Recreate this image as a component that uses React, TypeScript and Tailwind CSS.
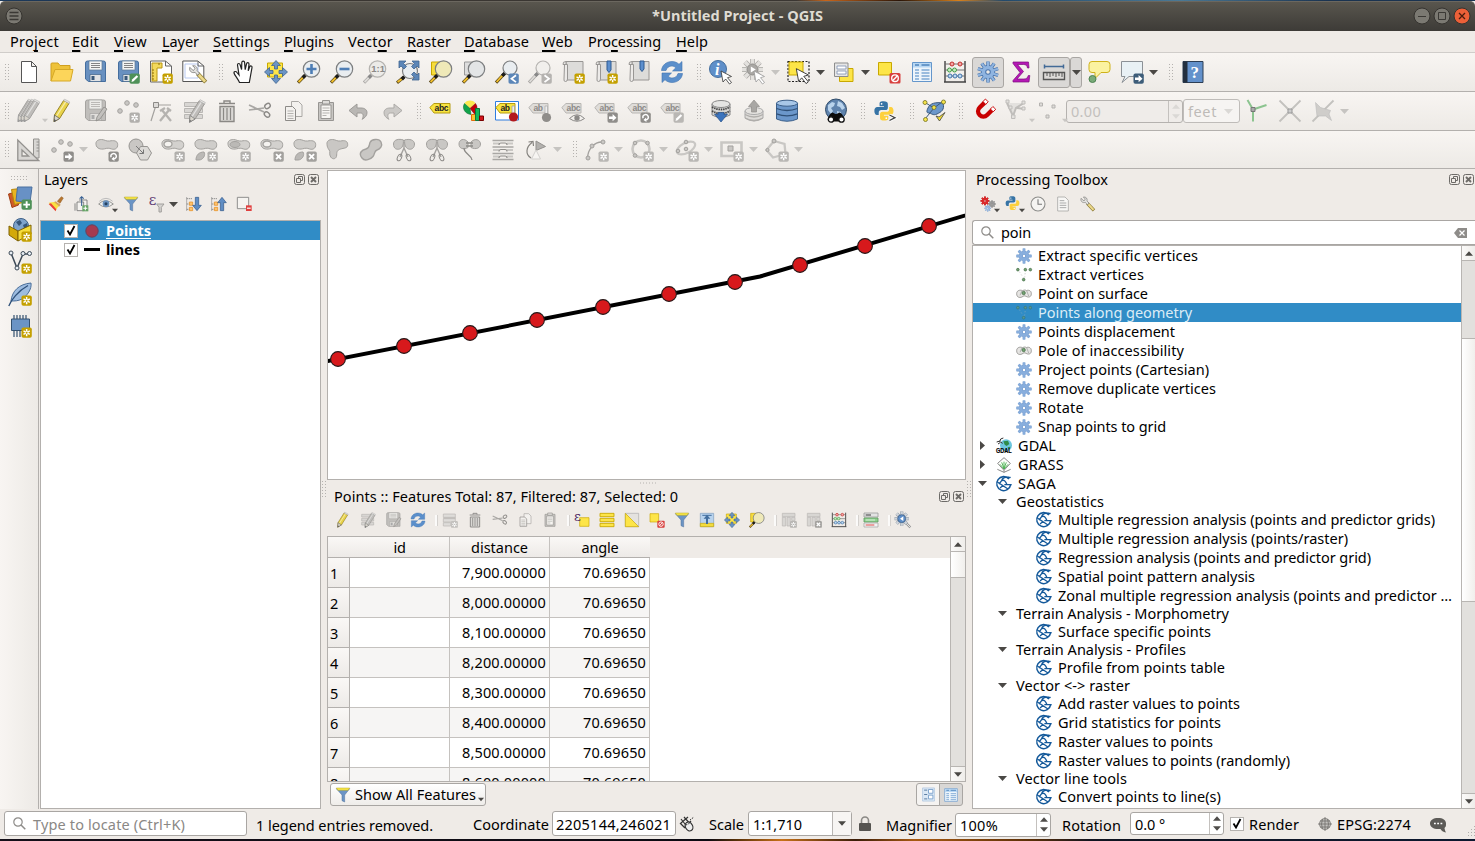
import React, { useLayoutEffect, useRef, useState } from "react";

type Kids = { children?: React.ReactNode };

/* Text run whose tracking is adjusted so that it takes the given width. */
function Fit({ w, className = "", children }: { w: number; className?: string } & Kids) {
  const ref = useRef<HTMLSpanElement>(null);
  const [ls, setLs] = useState(0);
  useLayoutEffect(() => {
    const el = ref.current;
    if (!el) return;
    const n = (el.textContent || "").length || 1;
    setLs((w - el.getBoundingClientRect().width) / n);
  }, [w]);
  return (
    <span ref={ref} className={"inline-block shrink-0 whitespace-pre " + className} style={{ letterSpacing: ls }}>
      {children}
    </span>
  );
}

function Svg({ s = 24, className = "", children }: { s?: number; className?: string } & Kids) {
  return (
    <svg width={s} height={s} viewBox="0 0 24 24" fill="none" className={"shrink-0 overflow-visible " + className}>
      {children}
    </svg>
  );
}

/* ---------- shared glyph parts ---------- */

const G = "#a3a19e";
const GL = "#c9c7c4";

function Star({ c = "#c4a000", x = 13.5, y = 13.5 }: { c?: string; x?: number; y?: number }) {
  return (
    <g transform={`translate(${x} ${y})`}>
      <rect width="10.3" height="10.3" rx="1.8" fill={c} />
      <path d="M5.15 1.6v7.1M2 3.4l6.3 3.5M8.3 3.4L2 6.9" stroke="#fff" strokeWidth="1.5" />
      <circle cx="5.15" cy="5.15" r="1" fill={c} />
    </g>
  );
}
function BadgeBox({ c = "#8f8d8a", children }: { c?: string } & Kids) {
  return (
    <g transform="translate(13.5 13.5)">
      <rect width="10.3" height="10.3" rx="1.8" fill={c} />
      {children}
    </g>
  );
}
const ArrowB = ({ c = "#8f8d8a" }: { c?: string }) => (
  <BadgeBox c={c}><path d="M1.5 3.9h3.6V1.6L9 5.15 5.1 8.8V6.5H1.5z" fill="#fff" /></BadgeBox>
);
const RotB = () => (
  <BadgeBox><path d="M2.6 5.8A2.7 2.7 0 1 1 6.6 7L4.200 7.400" stroke="#fff" strokeWidth="1.4" /><path d="M5.600 5L3 7.400l3 2z" fill="#fff" /></BadgeBox>
);
const XB = () => (
  <BadgeBox c={G}><path d="M2.6 2.6l5 5M7.6 2.6l-5 5" stroke="#fff" strokeWidth="1.9" /></BadgeBox>
);
const PenB = ({ c = "#4f9158" }: { c?: string }) => (
  <BadgeBox c={c}><path d="M2 8.4l.6-2.3 4.6-4.4 1.5 1.5-4.6 4.5z" fill="#fff" /></BadgeBox>
);

function Mag({ grey, fill = "#e9edf0", cx = 14.5, cy = 9, r = 8.2 }: { grey?: boolean; fill?: string; cx?: number; cy?: number; r?: number }) {
  const hx = cx - r * 0.75;
  const hy = cy + r * 0.75;
  return (
    <g>
      <path d={`M1 22.7L${hx} ${hy}`} stroke={grey ? "#a9a7a4" : "#5a4a1c"} strokeWidth="3.2" />
      <path d={`M1.6 22L${hx - 2.2} ${hy + 2.2}`} stroke={grey ? "#dddbd8" : "#f2bf2c"} strokeWidth="1.8" />
      <path d={`M${hx - 2.6} ${hy + 2.6}L${hx} ${hy}`} stroke={grey ? "#888" : "#1c1c1c"} strokeWidth="3.4" />
      <circle cx={cx} cy={cy} r={r} fill={fill} stroke={grey ? "#b5b3b0" : "#7d7f80"} strokeWidth="1.2" />
    </g>
  );
}

const Floppy = ({ grey }: { grey?: boolean }) => (
  <g>
    <path d="M2.5 3q0-2 2-2h16q2 0 2 2v18.5h-17l-3-2.5z" fill={grey ? "#c0beBB" : "#6890c0"} stroke={grey ? "#a5a3a0" : "#456e9e"} />
    <path d="M6 1h13v9H6z" fill={grey ? "#ecebe8" : "#f5f5f3"} stroke={grey ? "#a5a3a0" : "#5b7896"} strokeWidth=".7" />
    <path d="M8 3.5h9M8 5.5h9M8 7.5h9" stroke={grey ? "#b5b3b0" : "#777"} strokeWidth=".9" />
    <path d="M7 14.5h11v7H7z" fill={grey ? "#e1dfdc" : "#e1e3e5"} stroke={grey ? "#a5a3a0" : "#3f6288"} strokeWidth=".7" />
    <path d="M8.5 16h3v4h-3z" fill={grey ? "#aaa" : "#39587a"} />
  </g>
);

const Pencil = ({ c = "#e9d34a", d = "#8f7b1c", tip = "#555" }: { c?: string; d?: string; tip?: string }) => (
  <g>
    <path d="M4.5 16L13.6 1.4 19 4.4 9.6 19.5 4 22.8z" fill={c} stroke={d} strokeWidth=".9" />
    <path d="M6.6 17L15.8 2.6" stroke="#fff" strokeOpacity=".55" strokeWidth="1.3" />
    <path d="M13.6 1.4l1-1.2 5.2 2.8-.8 1.5z" fill="#e8e6e3" stroke="#aaa" strokeWidth=".6" />
    <path d="M4 22.8l.5-6.8 5.1 3.5z" fill="#d9d5cc" stroke={tip} strokeWidth=".7" />
    <path d="M4 22.8l.2-2.7 2 1.4z" fill={tip} />
  </g>
);

const Doc = ({ s = "#555", f = "#fff" }: { s?: string; f?: string }) => (
  <path d="M4.5 1.5h10l5 5v16h-15zM14.5 1.5v5h5" fill={f} stroke={s} strokeWidth="1" />
);

function Gear({ f = "#8fb4e0", s = "#4b76ad", hole = "#ece9e6", r = 10.6, n = 10, wide = 3.4 }: { f?: string; s?: string; hole?: string; r?: number; n?: number; wide?: number }) {
  const spokes = Array.from({ length: n }, (_, i) => {
    const a = (i * 2 * Math.PI) / n;
    return `M12 12L${12 + r * Math.sin(a)} ${12 - r * Math.cos(a)}`;
  }).join("");
  return (
    <g>
      <path d={spokes} stroke={s} strokeWidth={wide} />
      <circle cx="12" cy="12" r={r * 0.66} fill={s} />
      <path d={spokes} stroke={f} strokeWidth={wide - 1.4} />
      <circle cx="12" cy="12" r={r * 0.59} fill={f} />
      <circle cx="12" cy="12" r="2.8" fill={s} />
      <circle cx="12" cy="12" r="1.8" fill={hole} />
    </g>
  );
}

const Python = () => (
  <g>
    <path d="M11.5 1C7 1 7 2.6 7 4v2.600h5v1H4.500C2 7.600 1 9.600 1 12s1 4.600 3 4.600h2V14c0-2 1.200-3 3-3h4.800c1.700 0 2.700-1.200 2.700-2.800V4c0-2-1.600-3-5-3z" fill="#3673a5" />
    <path d="M12.500 23c4.500 0 4.500-1.600 4.500-3v-2.600h-5v-1h7.500c2.500 0 3.500-2 3.500-4.400s-1-4.600-3-4.600h-2V10c0 2-1.200 3-3 3h-4.800c-1.700 0-2.700 1.200-2.700 2.800V20c0 2 1.600 3 5 3z" fill="#fdd03c" />
    <circle cx="9.300" cy="3.800" r="1" fill="#fff" />
    <circle cx="14.700" cy="20.300" r="1" fill="#fff" />
  </g>
);

const Funnel = () => (
  <g>
    <path d="M2 2.500h20L14.500 12v10.500l-4-2V12z" fill="#6b94c5" stroke="#54759c" strokeWidth=".8" />
    <path d="M2 1.500h20L19.600 5H4.400z" fill="#f6e54a" stroke="#bca81d" strokeWidth=".7" />
  </g>
);

const Refresh = () => (
  <g fill="#5b8fcb" stroke="#3f73b0" strokeWidth=".6">
    <path d="M1.500 10.500C2 5 6.500 1.500 12 1.500c3 0 5.500 1.200 7 2.800l3-2.800v9.500h-9.500l3.300-3.200C14.800 6.800 13.500 6 12 6c-3 0-5 1.500-6 4.500z" />
    <path d="M22.500 13.500C22 19 17.500 22.500 12 22.500c-3 0-5.500-1.200-7-2.800l-3 2.800V13h9.500l-3.300 3.200c1 1 2.300 1.800 3.800 1.800 3 0 5-1.500 6-4.500z" />
  </g>
);

const FourArrows = () => (
  <g fill="#6b94c5" stroke="#3f658f" strokeWidth=".8">
    <path d="M12 .5l4.500 5h-3V9h-3V5.500h-3zM12 23.500l4.500-5h-3V15h-3v3.500h-3zM.5 12l5-4.500v3H9v3H5.500v3zM23.500 12l-5-4.500v3H15v3h3.500v3z" />
  </g>
);

const Blob = ({ y = 0, f = "#cfcdca" }: { y?: number; f?: string }) => (
  <path transform={`translate(0 ${y})`} d="M1 6.500C.5 3 3 1.500 6.500 1.500c3 0 4.500 2 8 1.500 4-.8 8-.5 8.200 3.500.2 4-3 5.500-6 4.500s-4-1-7-.2C5.500 11.800 1.500 10.500 1 6.500z" fill={f} stroke={G} />
);

function Tag({ c = "#f9e43f", s = "#b49b12", t = "#222", w = 19, label = "abc" }: { c?: string; s?: string; t?: string; w?: number; label?: string }) {
  return (
    <g>
      <path d={`M.8 8.500L5 4.500h${w - 2}v9.500H5z`} fill={c} stroke={s} />
      <text x="5.500" y="12" fontFamily="Liberation Sans" fontWeight="700" fontSize="8.500" fill={t} textLength={label.length * 4.700}>{label}</text>
    </g>
  );
}
const GTag = ({ label = "abc", w = 17 }: { label?: string; w?: number }) => <Tag c="#dfddda" s="#b8b6b3" t="#8b8987" label={label} w={w} />;

const Cursor = ({ f = "#fff", s = "#333" }: { f?: string; s?: string }) => (
  <path d="M12 11l10.500 5.500-4 1.200 4 4.800-2 1.500-3.800-5-2.700 3z" fill={f} stroke={s} strokeWidth=".8" />
);
const Abacus = () => (
  <g>
    <path d="M2 1v21M22 1v21M1 22h22" stroke="#444" strokeWidth="1.400" />
    <path d="M2 4h20M2 10h20M2 16h20" stroke="#666" strokeWidth=".9" />
    <g strokeWidth="1">
      <g fill="#f4a6a6" stroke="#c3302c"><circle cx="9" cy="4" r="2" /><circle cx="17" cy="4" r="2" /></g>
      <g fill="#c4ecc0" stroke="#459b48"><circle cx="6.500" cy="10" r="2" /><circle cx="11.500" cy="10" r="2" /></g>
      <g fill="#bdd9f2" stroke="#3f72a8"><circle cx="7" cy="16" r="2" /><circle cx="12" cy="16" r="2" /><circle cx="17" cy="16" r="2" /></g>
    </g>
  </g>
);
const Deselect = () => (
  <g>
    <path d="M1.500 2.500h13v12.500h-13z" fill="#fde548" stroke="#c8a800" />
    <rect x="12.500" y="13" width="11" height="10.500" rx="1.500" fill="#d8403e" />
    <circle cx="18" cy="18.200" r="3.300" stroke="#fff" strokeWidth="1.400" /><path d="M15.800 20.500l4.400-4.600" stroke="#fff" strokeWidth="1.400" />
  </g>
);
const TableI = () => (
  <g>
    <path d="M2.500 2.500h19v19h-19z" fill="#eef5fb" stroke="#6496cb" />
    <path d="M3 3h18v4.500H3z" fill="#b8d7f3" />
    <path d="M5 5h4M11.500 5h8" stroke="#4f85bd" strokeWidth="1.300" />
    <path d="M5 10h4M5 13h4M5 16h4M5 19h4M11.500 10h8M11.500 13h8M11.500 16h8M11.500 19h8" stroke="#7fa9d5" strokeWidth="1.400" />
  </g>
);
const Trash = () => (
  <g stroke="#8a8885" strokeWidth="1.400">
    <path d="M4 4.500h16M9 4V2h6v2" />
    <path d="M5 7.500h14v15H5z" fill="#dad8d5" />
    <path d="M8.500 9v12M12 9v12M15.500 9v12" strokeWidth="1.200" />
  </g>
);
const Scissors = () => (
  <g stroke="#8c8a87" strokeWidth="1.400">
    <path d="M1 6l15 7M1 11l15-2" strokeWidth="1.700" stroke="#a9a7a4" />
    <ellipse cx="19.500" cy="7" rx="3" ry="2.200" transform="rotate(-35 19.500 7)" />
    <ellipse cx="19" cy="15.500" rx="3" ry="2.200" transform="rotate(40 19 15.500)" />
  </g>
);
const Copy = () => (
  <g stroke="#aaa8a5" fill="#f3f1ee">
    <path d="M10.500 2.500h7l3.500 3.500v11.500h-10.500z" />
    <path d="M4.500 7.500h7l3 3v11h-10z" stroke="#8c8a87" /><path d="M6.500 12h6M6.500 14.500h6M6.500 17h6M6.500 19.500h6" stroke="#b5b3b0" />
  </g>
);
const Paste = () => (
  <g stroke="#979592">
    <path d="M4.500 3.500h15v18h-15z" fill="#c8c6c3" /><path d="M7 6h10v13.500H7z" fill="#f7f5f2" /><path d="M8.500 1.500h7v3.500h-7z" fill="#dedcd9" />
    <path d="M8.500 9h7M8.500 11.500h7M8.500 14h7M8.500 16.500h4" stroke="#b5b3b0" />
  </g>
);
const EditRows = () => (
  <g>
    <path d="M2.500 3.500h18v4h-18zM2.500 9.500h18v4h-18zM2.500 15.500h18v4h-18z" fill="#d8d6d3" stroke="#b9b7b4" />
    <g transform="translate(3.500 .5)"><Pencil c="#bfbdba" d="#979592" tip="#777" /></g>
  </g>
);
const FloppyPen = () => (
  <g><Floppy grey /><path d="M13 22l1-4 7-10 3 2-7 10z" fill="#c3c1be" stroke="#8c8a87" strokeWidth=".8" /></g>
);
const Wrench = () => (
  <g>
    <path d="M11 11l10 10.500" stroke="#8d7b35" strokeWidth="5" /><path d="M12.500 12.500l7.800 8.300" stroke="#ecd98b" strokeWidth="3.200" />
    <path d="M1.500 3.500C.5 8 4 11 8 9.500l3 3.500 2.500-2.300-3-3.200C11.500 4 9 .8 5 1.500l3 3-2 3z" fill="#e4e4e2" stroke="#7c7c7a" />
  </g>
);
const Pts = ({ c = GL }: { c?: string }) => (
  <g fill={c} stroke={G}><circle cx="4" cy="12" r="2.300" /><circle cx="11" cy="4" r="2.300" /><circle cx="20" cy="6" r="2.300" /></g>
);
const SagaI = () => (
  <g>
    <circle cx="11.500" cy="12" r="10" fill="#fff" />
    <path d="M19.500 4.500A10.500 10.500 0 1 0 22 13" stroke="#14599a" strokeWidth="2.300" />
    <path d="M23.500 13H12.500M17.500 2.800L22 2M20 1.800c-7-1-11 2-11.500 5M2 9l16 10.500M8.500 7c3-2 6 .5 8 6M8.500 7L4.500 12M6 18l5-4" stroke="#14599a" strokeWidth="2" />
  </g>
);
const GlobeLand = ({ c = "#42648c", s = "#2f4b69" }: { c?: string; s?: string }) => (
  <g><circle cx="12" cy="10.500" r="10.500" fill={c} stroke={s} />
    <path d="M4 6l4-3 3 1-1 3-3 2 2 3-2 3-3-4zM14 2l4 2 3 5-3 2-2-3-3-1zM13 12l4 1-1 4-3 1z" fill="#b9d3ec" /></g>
);

/* ---------- toolbar icons ---------- */

const I: Record<string, React.ReactNode> = {
  newDoc: <Doc />,
  open: <g><path d="M1 21V4q0-1 1-1h6l2 2.500h10V10" fill="#eec23a" stroke="#d0a020" /><path d="M1 21L5 9.500h18L20.500 21z" fill="#fcd55a" stroke="#d6a826" /></g>,
  save: <Floppy />,
  saveAs: <g><Floppy /><PenB /></g>,
  newLayout: <g><path d="M1.500 1h15l6 5v16h-21z" fill="#fff" stroke="#666" /><path d="M16.500 1v5h6" stroke="#666" /><path d="M3 3h10v5H8v13H3z" fill="#f3d95b" stroke="#b99615" /><path d="M3 10h2M3 13h2M3 16h2M3 19h2M10 3v2" stroke="#8c6f0c" /><Star /></g>,
  layoutMgr: <g><path d="M.8 1h15l6 5v15.500H.8z" fill="#fff" stroke="#555" /><path d="M3 4h13v14H3z" stroke="#b7c8f0" /><path d="M16 1v5h6" stroke="#666" /><g transform="translate(6.500 4.500) scale(.82)"><Wrench /></g></g>,
  hand: <path d="M8.500 22.500C7 19 3.500 15 3 13c-.3-1.800 2-2 3-.5L8 15 6.500 5c0-2 2.300-2 2.700 0l1.400 4.500L10.800 2.500c.2-2 2.700-1.900 2.800.1l.6 7L15.500 3.800c.4-1.800 2.600-1.500 2.500.4l-.8 6.600 1.500-4c.8-1.500 2.600-.8 2.300.8l-1.700 9.400-1 5.500z" fill="#fff" stroke="#222" strokeWidth="1.200" />,
  panSel: <g><path d="M3.500 3h15v14h-15z" fill="#fde548" stroke="#c8a800" /><FourArrows /></g>,
  zoomIn: <g><Mag /><path d="M14.500 4v10M9.500 9h10" stroke="#4d7db5" strokeWidth="2.600" /></g>,
  zoomOut: <g><Mag /><path d="M9.500 9h10" stroke="#4d7db5" strokeWidth="2.600" /></g>,
  zoom11: <g><Mag grey fill="#ecebe8" /><text x="8.200" y="12.300" fontFamily="Liberation Sans" fontWeight="700" fontSize="9.500" fill="#8b8987">1:1</text></g>,
  zoomFull: <g><Mag cx={14} cy={11} r={7.500} /><path d="M3 1h7L7.500 3.500l3 3-2.500 2.500-3-3L3 8zM23 1h-7l2.500 2.500-3 3L18 9l3-3 2 2zM23 20h-7l2.500-2.500-3-3 2.500-2.500 3 3 2-2z" fill="#5c86b7" stroke="#3f6590" strokeWidth=".8" /></g>,
  zoomSel: <g><path d="M2.500 2h9v13h-9z" fill="#f7dd3c" stroke="#c8a800" /><Mag fill="#efe9b8" /></g>,
  zoomLayer: <g><path d="M2.500 2h9v13h-9z" fill="#ddd" stroke="#999" /><Mag fill="#e3e5e6" /></g>,
  zoomLast: <g><Mag cx={15} cy={8} r={7} /><BadgeBox c="#5b86b8"><path d="M7.500 1.800L3 5.200l4.500 3.400" stroke="#fff" strokeWidth="1.800" /></BadgeBox></g>,
  zoomNext: <g><Mag grey cx={15} cy={8} r={7} fill="#f1efec" /><BadgeBox c="#b5b3b0"><path d="M3 1.800l4.500 3.400L3 8.600" stroke="#fff" strokeWidth="1.800" /></BadgeBox></g>,
  bookNew: <g><path d="M5 1.500h17V20H5z" fill="#dddcda" stroke="#989694" /><path d="M5 1.500Q1.500 1.500 2 4.500h3zM3.500 4.500h3V19q0 2.500-2 2.500T3 19z" fill="#eceae8" stroke="#989694" /><Star /></g>,
  bookShow: <g><path d="M5 1.500h17V20H5z" fill="#dddcda" stroke="#989694" /><path d="M5 1.500Q1.500 1.500 2 4.500h3zM3.500 4.500h3V19q0 2.500-2 2.500T3 19z" fill="#eceae8" stroke="#989694" /><path d="M13 1h4v9l-2 2.500-2-2.500z" fill="#5c8fce" stroke="#2f5b92" /><Star /></g>,
  bookMgr: <g><path d="M5 1.500h17V20H5z" fill="#dddcda" stroke="#989694" /><path d="M5 1.500Q1.500 1.500 2 4.500h3zM3.500 4.500h3V19q0 2.500-2 2.500T3 19z" fill="#eceae8" stroke="#989694" /><path d="M13 1h4v8l-2 2.500L13 9z" fill="#5c8fce" stroke="#2f5b92" /></g>,
  refresh: <Refresh />,
  info: <g><circle cx="9" cy="9" r="8.500" fill="#5f8fc9" stroke="#456f9f" /><text x="6" y="14.500" fontFamily="Liberation Serif" fontStyle="italic" fontWeight="700" fontSize="16" fill="#fff">i</text><Cursor /></g>,
  runAction: <g><g transform="translate(-1.500 -2.500)"><Gear f="#e3e1de" s="#aaa8a5" n={8} r={10.500} wide={5} /></g><circle cx="10.500" cy="9.500" r="5.500" fill="#a9a7a4" stroke="#8f8d8a" /><path d="M8.800 6.500l5 3-5 3z" fill="#fff" /><Cursor s="#999" /></g>,
  select: <g><path d="M1 1.500h21v20H1z" stroke="#222" strokeDasharray="2 1.500" strokeWidth="1.200" /><path d="M2 2h14v13H2z" fill="#fde548" stroke="#c8a800" /><g transform="translate(-4.500 -4) scale(1.150)"><Cursor /></g></g>,
  selForm: <g><path d="M7.500 8.500h13.500v13h-13.500z" fill="#fde548" stroke="#c8a800" /><path d="M2.500 3h13.500v13.500H2.500z" fill="#e6e6e6" stroke="#8d8d8d" /><path d="M5 6h9v3H5zM5 11h9v3H5z" fill="#fff" stroke="#7d8fb0" strokeWidth=".8" /></g>,
  deselect: <Deselect />,
  table: <TableI />,
  abacus: <Abacus />,
  gear: <Gear />,
  sigma: <path d="M4 2h15.500l.5 6h-1.500c-.5-2.500-1.500-3.500-4-3.500H8.500l6 7-6.500 7.500h7c2.500 0 3.500-1 4.300-3.500h1.500L20 22H4v-1.500L11 12.500 4 3.500z" fill="#b518b5" stroke="#7a0e7c" strokeWidth=".7" />,
  measure: <g><path d="M2 6.500h20M2.500 4.500v4M21.500 4.500v4" stroke="#426a97" strokeWidth="1.500" /><path d="M1.500 12.500h21v7h-21z" fill="#dcdad8" stroke="#555" strokeWidth="1.400" /><path d="M5 13v3M8 13v4M11 13v3M14 13v4M17 13v3M20 13v4" stroke="#555" /></g>,
  tip: <g><path d="M5 1.500h15q3 0 3 3v5q0 3-3 3h-6L8 18.500v-6H5q-3 0-3-3v-5q0-3 3-3z" fill="#fbf2a0" stroke="#cfb21a" /><circle cx="5.500" cy="19" r="3.500" fill="#79ab78" stroke="#4d8352" /></g>,
  annot: <g><path d="M1.500 1.500h21v15H9L2 22.500 5 16.500H1.500z" fill="#e9f1f5" stroke="#8c9196" /><ArrowB c="#3d5d79" /></g>,
  help: <g><path d="M2 1.500h20v21H2z" fill="#6391cb" stroke="#2c3e55" /><path d="M2 1.500h4.500v21H2z" fill="#222f3f" /><text x="9.500" y="17.500" fontFamily="Liberation Serif" fontWeight="700" fontSize="17" fill="#fff">?</text></g>,

  pencils: <g><g transform="translate(-3 0)"><Pencil c="#b9b7b4" d="#9d9b98" tip="#999" /></g><Pencil c="#b9b7b4" d="#9d9b98" tip="#999" /><g transform="translate(3 0)"><Pencil c="#bfbdba" d="#9d9b98" tip="#999" /></g></g>,
  pencil: <Pencil />,
  floppyPen: <FloppyPen />,
  addPts: <g><Pts /><Star c="#b1afac" /></g>,
  vertexTool: <g><path d="M2 22L7 6h15" stroke={G} strokeWidth="1.200" /><path d="M4.500 3.500h5v5h-5z" fill="#dddbd8" stroke="#8c8a87" /><path d="M11 22l9-11M13 11l9 11M11 12l5-3M18 9l4 3" stroke="#b5b3b0" strokeWidth="2.300" /></g>,
  editRows: <EditRows />,
  trash: <Trash />,
  cut: <Scissors />,
  copy: <Copy />,
  paste: <Paste />,
  undo: <path d="M2 11.500L10 5v4h4c4 0 6 2 6 4.800s-2 5-5 6.500c1.500-2 2-6.300-1.500-6.300H10v4z" fill="#b9b7b4" stroke="#9d9b98" />,
  redo: <path d="M22 11.500L14 5v4h-4c-4 0-6 2-6 4.800s2 5 5 6.500c-1.500-2-2-6.300 1.500-6.300H14v4z" fill="#cbc9c6" stroke="#acaaa7" />,
  tag: <Tag w={18} />,
  diagram: <g><path d="M8 9.500L2.500 4A7.500 7.500 0 0 1 13.500 4z" fill="#fce94f" /><path d="M8 9.500L13.500 4.500Q17 9 12.500 15z" fill="#c4000a" stroke="#6b0000" strokeWidth=".5" /><path d="M8 9.500L2.500 4.500C-.5 9 3 15 9 15.500z" fill="#12a34a" stroke="#066028" strokeWidth=".5" /><path d="M9.500 15.500h4v6h-4z" fill="#fbc42c" stroke="#e26b0a" /><path d="M13.500 9.500h4v12h-4z" fill="#15b95a" stroke="#08793a" /><path d="M17.500 17h4v4.500h-4z" fill="#d3151c" stroke="#780000" /></g>,
  tagPin: <g><path d="M.5 2.500h23v18.500H.500z" fill="#fff" stroke="#2f7de0" /><Tag w={17} label="ab" /><path d="M17 7h2.500v8H17z" fill="#eee" stroke="#999" strokeWidth=".7" /><circle cx="18.500" cy="18" r="4.600" fill="#b3181c" /></g>,
  gtagPin: <g><GTag label="ab" /><path d="M17 7h2.500v8H17z" fill="#eee" stroke="#aaa" strokeWidth=".7" /><circle cx="18.500" cy="18.500" r="4.600" fill="#8f8d8a" /></g>,
  gtagEye: <g><GTag /><path d="M8.500 19.500Q16 12 23.500 19.500 16 25 8.500 19.500z" fill="#f1efec" stroke="#8b8987" /><circle cx="16" cy="19" r="2.700" fill="#8b8987" /></g>,
  gtagMove: <g><GTag /><ArrowB /></g>,
  gtagRot: <g><GTag /><RotB /></g>,
  gtagPen: <g><GTag /><PenB c="#b9b7b4" /></g>,
  dbIn: <g><path d="M3 5v11q9 5 18 0V5" fill="#d5d5d3" stroke="#888" /><ellipse cx="12" cy="5" rx="9" ry="3.500" fill="#e5e5e3" stroke="#888" /><path d="M3 8q9 5 18 0M3 12q9 5 18 0" stroke="#444" strokeWidth="1.800" strokeDasharray="1.500 .8" /><path d="M12 23l6.500-8-3.500.5v-2H9v2l-3.500-.5z" fill="#3c74bd" stroke="#244f86" strokeWidth=".7" /></g>,
  dbOut: <g><path d="M3 12v7q9 6 18 0v-7" fill="#dedcd9" stroke="#aaa" /><ellipse cx="12" cy="12" rx="9" ry="3.500" fill="#e5e3e0" stroke="#aaa" /><path d="M3 15.500q9 5 18 0M3 19q9 5 18 0" stroke="#b0aeab" strokeWidth="1.300" /><path d="M12 1l5.500 6.500h-3V13h-5V7.500h-3z" fill="#a9a7a4" stroke="#8f8d8a" strokeWidth=".7" /></g>,
  db: <g><path d="M1.500 4v16q10.500 4.500 21 0V4" fill="#6b97cb" stroke="#3b5f8a" /><ellipse cx="12" cy="4.200" rx="10.500" ry="3" fill="#a8c7e8" stroke="#3b5f8a" /><path d="M1.500 9.500q10.500 4 21 0M1.500 14.800q10.500 4 21 0" stroke="#2f5077" strokeWidth="1.300" /></g>,
  globeBino: <g><GlobeLand c="#5f83ad" /><path d="M3.500 20.500q2-6.500 5-7l3 1.500 1 0 3-1.500q3 .5 5 7l-4 2h-8z" fill="#0c0c0c" /><circle cx="7" cy="20.500" r="2.700" fill="#fff" stroke="#111" strokeWidth="1.300" /><circle cx="17.500" cy="20.500" r="2.700" fill="#fff" stroke="#111" strokeWidth="1.300" /></g>,
  python: <g><g transform="translate(.5 1.500) scale(.87)"><Python /></g><path d="M16.500 16l5.500 2.700-5.500 2.800" stroke="#fff" strokeWidth="3" /><path d="M16.500 16l5.500 2.700-5.500 2.800" stroke="#444" strokeWidth="1.300" /></g>,
  topo: <g><path d="M6 9C8 4 14 3 21 4c2 7-2 9-6 11s-6-1-8-1-3-1-1-5z" fill="#6b97cb" stroke="#39587c" /><path d="M3 3.500l9 5.500-9 11M12 9l8-6" stroke="#39587c" /><g fill="#f6e54a" stroke="#7e7a2a" strokeWidth=".9"><circle cx="3" cy="3.500" r="2" /><circle cx="12" cy="8.500" r="2" /><circle cx="21.500" cy="3" r="2" /><circle cx="3.500" cy="20.500" r="2" /></g><path d="M14 17l3.500 5L23 13.500l-6 4.500z" fill="#f6e033" stroke="#444" strokeWidth=".8" /></g>,
  magnet: <g transform="translate(1.300 1) rotate(45 11 12) scale(.88)"><path d="M6 5v8a6 6 0 0 0 12 0V5" stroke="#c80000" strokeWidth="5" /><path d="M3.800 1.500h4.500v4H3.800zM15.800 1.500h4.500v4h-4.500z" fill="#fff" stroke="#c80000" /></g>,
  snapVec: <g stroke="#bfbdba" fill="#e3e1de"><path d="M3 4l6 13 3-8 8-5M13 9l8 1" strokeWidth="2" /><path d="M2 1h3v3H2zM7.500 16h3.500v3.500H7.500zM18 2h3v3h-3zM18 8h3v3h-3zM5 7h3v3H5z" /></g>,
  snapPts: <g stroke="#b5b3b0" fill="#dedcd9"><path d="M2.500 4h3v3h-3zM15 6h3v3h-3zM9 16h3v3H9z" /></g>,
  snapTopo: <g><path d="M8 10.500v12M8 10.500L21.500 6M8 10.500L2.500 1" stroke="#8cc48f" strokeWidth="2" /><path d="M6 8.500h4v4H6z" fill="#aaa" stroke="#777" /></g>,
  snapX: <g><path d="M1.500 1.500l21 21M22.500 1.500l-21 21" stroke="#c3c1be" strokeWidth="1.800" /><path d="M10 10h4v4h-4z" fill="#ccc" stroke="#999" /></g>,
  trace: <g><path d="M22.500 1.500l-21 21" stroke="#c3c1be" strokeWidth="1.800" /><path d="M4.500 3.500l5 5 10 3-1.500 3.500 2.500 6.500-6-4.500H6z" fill="#cfcdca" stroke="#bbb" strokeWidth=".6" /></g>,

  triRuler: <g fill="#d8d6d3" stroke="#93918e"><path d="M16.500 1h5.500v19h-5.500z" /><path d="M19.500 4H22M19.500 7H22M19.500 10H22M19.500 13H22" /><path d="M.8 2v20.500h21zM5 12v6h6.500z" fillRule="evenodd" strokeWidth="1.300" /></g>,
  movePts: <g><Pts /><ArrowB /></g>,
  rotFeat: <g><Blob /><RotB /></g>,
  simplify: <g stroke="#979592" fill="#c9c7c4"><circle cx="8" cy="8" r="7" /><path d="M8.500 15l4-6.500h7l4 6.500-4 7h-7z" fill="#dcdad7" /><path d="M8 8l7.500 7.500M11.500 15.500h4v-4" stroke="#777" fill="none" /></g>,
  addRing: <g><Blob f="#d3d1ce" /><ellipse cx="7" cy="6" rx="4" ry="3" fill="#f5f3f0" stroke={G} strokeWidth="1.300" /><Star c="#b1afac" /></g>,
  addPart: <g><Blob /><path d="M2 22c0-5 3-8 8-8 2 3-1 8-5 8z" fill="#bbb9b6" stroke={G} /><Star c="#b1afac" /></g>,
  fillRing: <g><Blob f="#d3d1ce" /><ellipse cx="8" cy="6.500" rx="5" ry="3" fill="#bbb9b6" stroke={G} /><Star c="#b1afac" /></g>,
  delRing: <g><Blob f="#d3d1ce" /><ellipse cx="7" cy="6" rx="4" ry="3" fill="#f5f3f0" stroke={G} strokeWidth="1.300" /><XB /></g>,
  delPart: <g><Blob /><path d="M2 22c0-5 3-8 8-8 2 3-1 8-5 8z" fill="#bbb9b6" stroke={G} /><XB /></g>,
  reshape: <path d="M1 6.500C.5 3 3 1.500 6.500 1.500c3 0 4.500 2 8 1.500 4-.8 7-.5 7.200 3.500.2 4-4 3.500-7 4.500s-4 2-4 6-4 5-6 2 0-5-1.500-7S1.300 9 1 6.500z" fill={GL} stroke={G} />,
  offset: <path d="M3 20c-4-5 0-8 4-9s3-4 4-6.500C12.500 1 20 0 22 4s-1 7-4 8-2 4-4 6.500S6 24 3 20z" fill={GL} stroke={G} strokeWidth="1.400" />,
  split: <g><path d="M11.500 2C7 .5 1.500 1.500 1.500 6s3 6 6 5 4-4 4-9zM12.500 2c5-1.500 10 0 10 4s-3 6-6 5-4-4-4-9z" fill={GL} stroke={G} /><path d="M12 4v6l-4 9M12 10l4 9" stroke={G} strokeWidth="1.400" /><ellipse cx="7.500" cy="19.500" rx="2" ry="3.500" transform="rotate(25 7.500 19.500)" stroke="#8c8a87" /><ellipse cx="16.500" cy="19.500" rx="2" ry="3.500" transform="rotate(-25 16.500 19.500)" stroke="#8c8a87" /></g>,
  merge: <g><path d="M10 4C6-.5 1 1.500 1 6s4 6 9 3.500zM13 4c4-4.500 9.500-2 9.500 2s-4.500 6-9.500 3.500z" fill={GL} stroke={G} /><path d="M8 5h7M8 8h7M6 10c0 6 7 6 8 12" stroke="#8c8a87" strokeWidth="1.300" /></g>,
  mergeAttr: <g><path d="M1.500 2.500h21M1.500 9h21M1.500 15.500h21M1.500 21.500h21" stroke="#a9a7a4" strokeWidth="1.300" /><path d="M2 5.500h6M16 5.500h6M2 12h6M16 12h6M2 18.500h6M16 18.500h6" stroke="#c9c7c4" strokeWidth="1.800" /><path d="M8 7q0-2 2-2h4q2 0 2 2M8 13.500q0-2 2-2h4q2 0 2 2M8 20q0-2 2-2h4q2 0 2 2" stroke="#8f8d8a" strokeWidth="1.200" /></g>,
  rotSym: <g><path d="M12 3l9.500 5.500-9.500 4z" fill="#b3b1ae" stroke="#93918e" /><path d="M12 12l-4.500 9h9z" fill="#f7f5f2" stroke="#d3d1ce" /><path d="M7 20C1 16 2 9 8 4.500M4.500 4L9 3.500 9.500 8" stroke="#85837f" strokeWidth="1.200" /></g>,
  arc: <g><path d="M2.500 20C3 11 9 4 17 4" stroke={G} strokeWidth="1.300" /><g fill={GL} stroke={G}><circle cx="3" cy="20" r="2" /><circle cx="7" cy="8" r="2" /><circle cx="18" cy="4" r="2" /></g><Star c="#b9b7b4" /></g>,
  circ: <g><circle cx="11" cy="11" r="8.500" stroke={GL} strokeWidth="2.600" /><g fill={GL} stroke={G}><circle cx="5" cy="5" r="1.800" /><circle cx="17.500" cy="5" r="1.800" /><circle cx="5" cy="17.500" r="1.800" /></g><Star c="#b9b7b4" /></g>,
  ell: <g><ellipse cx="11" cy="10" rx="10" ry="5" transform="rotate(-28 11 10)" stroke={GL} strokeWidth="2.200" /><g fill={GL} stroke={G}><circle cx="11" cy="4" r="1.800" /><circle cx="11" cy="11" r="1.800" /><circle cx="3" cy="13" r="1.800" /></g><Star c="#b9b7b4" /></g>,
  rectI: <g><path d="M1.500 4.500h20V18h-20z" stroke={GL} strokeWidth="2.600" /><path d="M8 8h5v5H8z" stroke={G} fill={GL} /><Star c="#b9b7b4" /></g>,
  poly: <g><path d="M9 3l10.500 3 1 10L8 19.500 1.500 12z" stroke={GL} strokeWidth="2.300" /><g fill={GL} stroke={G}><circle cx="9" cy="3" r="2" /><circle cx="2.500" cy="12" r="1.600" /></g><Star c="#b9b7b4" /></g>,

  addLayer: <g><path d="M.5 8l7-2 3 13-6.500 2.500z" fill="#d05a28" stroke="#a23e14" /><path d="M3.500 3.500l9-1 2 14-8 2z" fill="#eab421" stroke="#b88608" /><path d="M9.500 1h14.500l-2 15.500-14-1.500z" fill="#6891c5" stroke="#4a709f" /><BadgeBox c="#4f9158"><path d="M5.150 1.800v6.700M1.800 5.150h6.700" stroke="#fff" strokeWidth="1.900" /></BadgeBox></g>,
  geopkg: <g><circle cx="13" cy="8" r="7.500" fill="#7ea3cc" stroke="#3d5f86" /><path d="M8 4l4-2 2 3-3 3zM15 7l4-2 1 5h-4z" fill="#35557a" /><path d="M1 8l9 5v10l-9-6z" fill="#d3a90a" stroke="#7e6204" /><path d="M10 13l13-6v9l-13 7z" fill="#f6dd3d" stroke="#7e6204" /><Star /></g>,
  shp: <g><path d="M3 3l6 15 6-14 7 0" stroke="#3d4a57" strokeWidth="1.500" /><g fill="#e8eef4" stroke="#3d4a57"><circle cx="3" cy="3" r="2" /><circle cx="9" cy="18" r="2" /><circle cx="15" cy="3.500" r="2" /><circle cx="21.500" cy="3.500" r="2" /></g><Star /></g>,
  feather: <g><path d="M3 19C4 9 11 2 23 1c1 6-4 13-9 16-4 2-7 2-11 2z" fill="#9dbce0" stroke="#4a6e99" /><path d="M.800 24C3 18 10 9 20 3.500" stroke="#2e5079" strokeWidth="1.300" /><Star /></g>,
  chip: <g><path d="M6 1v22M9 1v22M12 1v22M15 1v22M18 1v22" stroke="#34516f" strokeWidth="1.200" /><path d="M3.500 5h18v11.500h-18z" fill="#6b94c5" stroke="#34516f" /><Star /></g>,

  brush: <g><path d="M14 8L20 1l3 2-5 8z" fill="#b8762e" stroke="#8a5318" strokeWidth=".7" /><path d="M11 8l8 5-2.500 3L8 10z" fill="#d8a35c" /><path d="M1 10l8-1 7 6-5 7z" fill="#fae042" /><path d="M1 12l3.500-1 8 9-1 3z" fill="#e9403a" /></g>,
  addGroup: <g><path d="M9 6h12v12M6 9h10v13H6zM3 11v11" stroke="#777" fill="#f5f3f0" strokeWidth="1.300" /><path d="M13 1v14M10 4l3-3 3 3" stroke="#365f92" strokeWidth="1.600" /><path d="M14 14h9v9h-9z" fill="#65a365" /><path d="M18.500 15.500v6M15.500 18.500h6" stroke="#fff" strokeWidth="1.600" /></g>,
  eye: <g><path d="M1 12Q11 2 23 12 12 21 1 12z" fill="#f0f0ee" stroke="#8a8a88" strokeWidth="1.300" /><circle cx="12" cy="11.500" r="5" fill="#6890bd" /><circle cx="12" cy="11.500" r="2.300" fill="#26405f" /><path d="M2 8Q12-1 22 8" stroke="#bbb" strokeWidth="1.500" /></g>,
  funnel: <Funnel />,
  epsFilter: <g><text x="1" y="14" fontFamily="DejaVu Serif" fontSize="22" fill="#5e3a73">ε</text><path d="M13 12h11l-4 5v7h-3.500v-7z" fill="#d5d3d0" stroke="#9d9b98" strokeWidth="1.400" /></g>,
  expand: <g><path d="M1 2v20M1 4h8M1 12h6M1 20h6" stroke="#888" strokeWidth="1.400" strokeDasharray="2 1" /><path d="M5 9h5v5H5zM5 17h5v5H5z" fill="#ffc36b" stroke="#e38a1b" /><path d="M14 2h5v12h4l-6.500 8-6.500-8h4z" fill="#5f8dc4" stroke="#2f5585" /></g>,
  collapse: <g><path d="M1 2v20M1 4h8M1 12h6M1 20h6" stroke="#888" strokeWidth="1.400" strokeDasharray="2 1" /><path d="M5 9h5v5H5zM5 17h5v5H5z" fill="#ffc36b" stroke="#e38a1b" /><path d="M14 22h5V10h4l-6.500-8L10 10h4z" fill="#5f8dc4" stroke="#2f5585" /></g>,
  remove: <g><path d="M2 2h17v17H2z" fill="#f5f3f0" stroke="#888" strokeWidth="1.400" /><path d="M15 14h8.500v8.500H15z" fill="#e0403f" /><path d="M16.500 18.300h5.500" stroke="#fff" strokeWidth="1.800" /></g>,

  newRows: <g><path d="M2 3h18v5H2zM2 10h18v5H2zM2 16h11v5H2z" fill="#dedcd9" stroke="#b9b7b4" /><path d="M2 9h19" stroke="#a9a7a4" /><Star c="#c3c1be" /></g>,
  selExpr: <g><path d="M8.500 8.500h14v13h-14z" fill="#fde548" stroke="#c8a800" /><text x="0" y="13" fontFamily="DejaVu Serif" fontSize="20" fill="#4e2a63">ε</text></g>,
  selAll: <g fill="#fde548" stroke="#c8a800" strokeWidth="1.300"><path d="M1.500 2h21v5h-21zM1.500 9.500h21v5h-21zM1.500 17h21v5h-21z" /></g>,
  invert: <g><path d="M2 2h20v20H2z" fill="#e4e2df" stroke="#aaa" /><path d="M2 2v20h20z" fill="#fde548" stroke="#c8a800" /></g>,
  topSel: <g><path d="M2 2h20v20H2z" fill="#b8d3ee" stroke="#7d9cbd" /><path d="M2 17h20v5H2z" fill="#f3dc3e" stroke="#c8a800" /><path d="M12 4l5 6h-3.500v8h-3v-8H7z" fill="#426e9f" /><path d="M5 5h14" stroke="#426e9f" strokeWidth="1.500" /></g>,
  addCol: <g><path d="M2 2h19v5H2zM2 8h5v13H2zM9 8h5v13H9zM16 8h5v5h-5z" fill="#d8d6d3" stroke="#b9b7b4" /><Star c="#b9b7b4" /></g>,
  delCol: <g><path d="M2 2h19v5H2zM2 8h5v13H2zM9 8h5v13H9zM16 8h5v5h-5z" fill="#d8d6d3" stroke="#b9b7b4" /><XB /></g>,
  cond: <g strokeWidth="1.200"><path d="M1.500 1.500h21v6h-21z" fill="#e3e3e3" stroke="#999" /><path d="M1.500 9h21v6h-21z" fill="#8fd08f" stroke="#5b9a5d" /><path d="M1.500 16.500h21v6h-21z" fill="#f3f3f3" stroke="#aaa" /><path d="M4 4.500h8" stroke="#444" strokeWidth="1.600" /><path d="M4 12h14" stroke="#d5f0d5" strokeWidth="1.600" /><path d="M4 19.500h13" stroke="#e04040" strokeWidth="1.400" /></g>,
  dock: <g><path d="M15 15l8 8" stroke="#999" strokeWidth="3.500" /><path d="M15 15l8 8" stroke="#e5e5e5" strokeWidth="1.500" /><g transform="translate(-2 -2)"><Gear f="#cfd4da" s="#8b949e" n={8} wide={5} /></g><circle cx="10" cy="10" r="6" fill="#5f8fc9" stroke="#35557a" /><path d="M12.500 6.500l-5 3.500 5 3.500z" fill="#fff" /></g>,

  procGears: <g><g transform="scale(.62)"><Gear f="#dd2a2c" s="#c41c1f" n={8} wide={4.400} /></g><g transform="translate(12 6) scale(.5)"><Gear f="#9a9a9a" s="#777" n={8} wide={4.400} /></g><g transform="translate(6 13) scale(.46)"><Gear f="#9fbfe6" s="#7f9fc9" n={8} wide={4.400} /></g></g>,
  pythonS: <g transform="translate(0 -.5) scale(.94)"><Python /></g>,
  clock: <g stroke="#8c8c8a"><circle cx="12" cy="12" r="10.500" fill="#f5f4f2" strokeWidth="1.600" /><path d="M12 5v7.500h6" strokeWidth="1.600" stroke="#777" /></g>,
  log: <g><path d="M4 1.500h11l5 5v16H4z" fill="#f8f7f5" stroke="#ababa9" strokeWidth="1.300" /><path d="M7 7h7M7 10.500h10M7 14h10M7 17.500h10" stroke="#aaa" strokeWidth="1.500" /></g>,
  wrench: <Wrench />,

  verts: <g><path d="M5 7l6 9M13 16l1-9M14 4h7" stroke="#bbb" strokeDasharray="2 3" /><g fill="#73a173" stroke="#3e683f"><circle cx="2.800" cy="4" r="2" /><circle cx="14" cy="4" r="2" /><circle cx="21.500" cy="4" r="2" /><circle cx="11.500" cy="19" r="2" /></g></g>,
  surface: <g><path d="M1 11.500C1 6 7 5.500 9.500 7c3-1 4.500-1.500 6 0 2-1.300 7.500-1 7.500 4.500s-4.500 6-8 4c-2-1.500-4-.5-6 1C5 18 1 17 1 11.500z" fill="#e6e5e3" stroke="#8c8a87" strokeWidth="1.200" /><path d="M9 7l-3 7M16 7l3 8" stroke="#999" /><circle cx="11.500" cy="10.500" r="2.500" fill="#73a173" stroke="#3e683f" /></g>,
  gdal: <g><circle cx="15" cy="11" r="9" fill="#6fc7e0" /><path d="M11 5l7-1 2 5-4 3-3-2zM17 14l5-1-2 4z" fill="#2f8b4a" /><path d="M1 6l5-1.500 1-3L11 0M5 5l5 3M3 9l3-2" stroke="#333" strokeWidth="1.500" /><text x="0" y="23" textLength="23.500" lengthAdjust="spacingAndGlyphs" fontFamily="Liberation Sans" fontWeight="700" fontSize="11" fill="#000" stroke="#000" strokeWidth=".3">GDAL</text></g>,
  grass: <g><path d="M2 18.500l10 4.500 10-4.500M12 20v3" stroke="#888" strokeWidth="1.500" /><path d="M12 1l9.500 8.500L12 20 2.500 9.500z" fill="#fdfdfb" stroke="#777" strokeWidth="1.300" /><path d="M12 18V7M12 17L8.500 8M12 17l3.500-9M12 18l-6-7M12 18l6-7" stroke="#3fae45" strokeWidth="1.300" /></g>,
  saga: <SagaI />,
  gearS: <Gear f="#88aedd" s="#7199cc" hole="#fff" r={11.300} n={8} wide={4.200} />,
  formV: <g><path d="M2.500 1.500h19v21h-19z" fill="#dbe8f5" stroke="#a3bfdc" /><path d="M5 5h5M5 12h5M5 19h5" stroke="#5d7ea3" strokeWidth="1.600" /><path d="M12 4h7v6h-7zM12 13h7v6h-7z" fill="#fff" stroke="#6c98c6" strokeWidth="1.300" /></g>,
};

/* ---------- small controls ---------- */

const Caret = ({ c = "#4a4845", className = "" }: { c?: string; className?: string }) => (
  <svg width="9" height="5" viewBox="0 0 9 5" className={"shrink-0 " + className}><path d="M0 0h9L4.500 5z" fill={c} /></svg>
);
const Dots = ({ className = "" }: { className?: string }) => (
  <svg width="5" height="17" viewBox="0 0 5 17" className={"shrink-0 " + className}>
    <path d="M.5 0v17M3.500 0v17" stroke="#b5b2af" strokeWidth="1" strokeDasharray="1 2" />
  </svg>
);
const Handle = ({ first }: { first?: boolean }) => (
  <div className={first ? "flex w-[13px] shrink-0 items-center pl-[5px]" : "flex w-4 shrink-0 items-center pl-[8px]"}><Dots /></div>
);
const Splitter = () => <div className="flex w-[6px] shrink-0 items-center justify-center"><Dots /></div>;
function Btn({ i, on, sub }: { i: string; on?: boolean; sub?: boolean }) {
  return (
    <div className="relative flex h-full w-[33px] shrink-0 items-center pl-1">
      {on && <div className="absolute top-[4px] left-0 h-[31px] w-[32px] rounded-[3px] border border-[#a9a6a3] bg-[#dad8d6]" />}
      <Svg className="relative">{I[i]}</Svg>
      {sub && <Caret c="#c9c7c4" className="absolute right-[-2px] bottom-[7px] w-[6px]" />}
    </div>
  );
}
function MenuBtn({ i, on, grey }: { i: string; on?: boolean; grey?: boolean }) {
  return (
    <div className="flex h-full w-[45px] shrink-0">
      <Btn i={i} on={on} />
      <div className={on ? "mt-[4px] -ml-px flex h-[31px] w-[12px] items-center justify-center rounded-[3px] border border-[#a9a6a3] bg-[#dad8d6]" : "flex h-full w-[12px] items-center"}>
        <Caret c={grey ? "#c6c4c1" : "#4a4845"} />
      </div>
    </div>
  );
}
const DockBtns = () => (
  <div className="flex gap-[3px]">
    <svg width="11" height="11" viewBox="0 0 11 11" fill="none" stroke="#6d6b68"><rect x=".5" y=".5" width="10" height="10" rx="2" /><path d="M4.500 4V2.500h4v4H7M2.500 4.500h4v4h-4z" /></svg>
    <svg width="11" height="11" viewBox="0 0 11 11" fill="none" stroke="#6d6b68"><rect x=".5" y=".5" width="10" height="10" rx="2" /><path d="M3 3l5 5M8 3L3 8" strokeWidth="1.900" /></svg>
  </div>
);
const Check = () => (
  <div className="flex h-[14px] w-[14px] shrink-0 items-center justify-center border border-[#b5b2af] bg-white">
    <svg width="10" height="11" viewBox="0 0 10 11" fill="none"><path d="M1.500 5.500l2.500 4L8.500 1" stroke="#000" strokeWidth="1.800" /></svg>
  </div>
);
const Lens = () => (
  <svg width="13" height="13" viewBox="0 0 13 13" fill="none" stroke="#8e8c89" strokeWidth="1.200" className="shrink-0"><circle cx="5" cy="5" r="4.200" /><path d="M8 8l4.300 4.300" strokeWidth="1.500" /></svg>
);
const Spin = ({ c = "#4f4d4a" }: { c?: string }) => (
  <div className="flex h-full w-[14px] shrink-0 flex-col items-center justify-center gap-[5px] border-l border-[#c4c1be]">
    <Caret c={c} className="w-[8px] rotate-180" /><Caret c={c} className="w-[8px]" />
  </div>
);
const Tri = ({ up }: { up?: boolean }) => (
  <div className="flex h-[14px] w-full shrink-0 items-center justify-center border-[#b8b5b2] bg-gradient-to-r from-[#fbfaf9] to-[#efedea]"><Caret c="#4a4845" className={up ? "w-[8px] rotate-180" : "w-[8px]"} /></div>
);

/* ---------- data ---------- */

const MENUS: [string, string, string, string, number][] = [
  ["Pro", "j", "ect", "w-[62px]", 49], ["", "E", "dit", "w-[42px]", 27], ["", "V", "iew", "w-[48px]", 33], ["", "L", "ayer", "w-[51px]", 37],
  ["", "S", "ettings", "w-[71px]", 57], ["", "P", "lugins", "w-[64px]", 50], ["Vect", "o", "r", "w-[59px]", 45], ["", "R", "aster", "w-[57px]", 44],
  ["", "D", "atabase", "w-[78px]", 65], ["", "W", "eb", "w-[46px]", 31], ["Pro", "c", "essing", "w-[88px]", 73], ["", "H", "elp", "w-[40px]", 32],
];

type Node = { k: "a" | "p" | "g" | "s"; t: string; w: number; i?: string; sel?: boolean; open?: boolean };
const TREE: Node[] = [
  { k: "a", i: "gearS", t: "Extract specific vertices", w: 160 },
  { k: "a", i: "verts", t: "Extract vertices", w: 106 },
  { k: "a", i: "surface", t: "Point on surface", w: 110 },
  { k: "a", i: "verts", t: "Points along geometry", w: 154, sel: true },
  { k: "a", i: "gearS", t: "Points displacement", w: 137 },
  { k: "a", i: "surface", t: "Pole of inaccessibility", w: 146 },
  { k: "a", i: "gearS", t: "Project points (Cartesian)", w: 171 },
  { k: "a", i: "gearS", t: "Remove duplicate vertices", w: 178 },
  { k: "a", i: "gearS", t: "Rotate", w: 46 },
  { k: "a", i: "gearS", t: "Snap points to grid", w: 128 },
  { k: "p", i: "gdal", t: "GDAL", w: 38 },
  { k: "p", i: "grass", t: "GRASS", w: 46 },
  { k: "p", i: "saga", t: "SAGA", w: 38, open: true },
  { k: "g", t: "Geostatistics", w: 88 },
  { k: "s", t: "Multiple regression analysis (points and predictor grids)", w: 377 },
  { k: "s", t: "Multiple regression analysis (points/raster)", w: 290 },
  { k: "s", t: "Regression analysis (points and predictor grid)", w: 313 },
  { k: "s", t: "Spatial point pattern analysis", w: 197 },
  { k: "s", t: "Zonal multiple regression analysis (points and predictor …", w: 394 },
  { k: "g", t: "Terrain Analysis - Morphometry", w: 213 },
  { k: "s", t: "Surface specific points", w: 153 },
  { k: "g", t: "Terrain Analysis - Profiles", w: 170 },
  { k: "s", t: "Profile from points table", w: 167 },
  { k: "g", t: "Vector <-> raster", w: 114 },
  { k: "s", t: "Add raster values to points", w: 182 },
  { k: "s", t: "Grid statistics for points", w: 163 },
  { k: "s", t: "Raster values to points", w: 155 },
  { k: "s", t: "Raster values to points (randomly)", w: 232 },
  { k: "g", t: "Vector line tools", w: 111 },
  { k: "s", t: "Convert points to line(s)", w: 163 },
];

const ROWS = ["7,900.00000", "8,000.00000", "8,100.00000", "8,200.00000", "8,300.00000", "8,400.00000", "8,500.00000", "8,600.00000"];
const DOTS = [[338, 359], [404, 346], [470, 333], [537, 320], [603, 307], [669, 294], [735, 282], [800, 265], [865, 246], [929, 226]];

function TreeRow({ n }: { n: Node }) {
  const arrow = n.k === "g" || n.open;
  const pad = n.k === "a" ? "pl-[43px]" : n.k === "p" ? "pl-[5px]" : n.k === "g" ? "pl-[25px]" : "pl-[63px]";
  return (
    <div className={`flex shrink-0 items-center ${n.k === "g" ? "h-[17px]" : "h-[19px]"} ${pad} ${n.sel ? "bg-[#308cc6] text-[#dcecf6]" : "text-black"}`}>
      {n.k === "p" && !n.open && <svg width="9" height="9" viewBox="0 0 9 9" className="mr-[9px]"><path d="M2 0v9l5-4.500z" fill="#4a4845" /></svg>}
      {arrow && <Caret className="mr-[9px]" />}
      {n.k !== "g" && <Svg s={16} className={n.sel ? "mr-[6px] opacity-60" : "mr-[6px]"}>{I[n.i || "saga"]}</Svg>}
      <Fit w={n.w}>{n.t}</Fit>
    </div>
  );
}

const Small = ({ i, sub }: { i: string; sub?: boolean }) => (
  <div className="relative flex w-[25px] shrink-0 items-center">
    <Svg s={16}>{I[i]}</Svg>
    {sub && <Caret className="absolute right-[5px] -bottom-[1px] w-[6px]" />}
  </div>
);
const SmallSep = () => <div className="mr-[5px] h-[11px] w-[2px] shrink-0 bg-[#fbfaf9] shadow-[1px_0_0_#d5d2cf]" />;

const BAR = "flex shrink-0 items-center bg-gradient-to-b from-[#f8f5f2] to-[#edeae6]";

export default function App() {
  return (
    <div className="flex h-[841px] w-[1475px] flex-col overflow-hidden bg-[#efebe7] font-['Noto_Sans',sans-serif] text-[14.5px] leading-[19px] text-black">
      {/* window title */}
      <div className="h-px shrink-0 bg-[linear-gradient(90deg,#1c3a5c_0,#1c2a3c_16%,#3a3632_22%,#3a3632_54%,#c8651a_56%,#2a1508_61%,#d8801a_65%,#234a6b_68%,#4a7894_80%,#1a3350_90%)]" />
      <div className="flex h-[30px] shrink-0 items-center rounded-t-[5px] border-t border-[#6b675f] bg-gradient-to-b from-[#59564e] to-[#3d3b37] pr-[4px] pb-px pl-[5px]">
        <svg width="18" height="18" viewBox="0 0 18 18"><circle cx="9" cy="9" r="8" fill="#7b7972" stroke="#35332f" /><path d="M4.500 5.500h9M4.500 9h9M4.500 12.500h9" stroke="#3b3935" strokeWidth="1.500" /></svg>
        <div className="flex flex-1 justify-center pb-px pl-[39px]"><Fit w={171} className="font-bold text-[#dfdbd2]">*Untitled Project - QGIS</Fit></div>
        <div className="flex gap-[2px]">
          <svg width="18" height="18" viewBox="0 0 18 18" fill="none"><circle cx="9" cy="9" r="8" fill="#7b7972" stroke="#35332f" /><path d="M5 9.500h8" stroke="#3b3935" /></svg>
          <svg width="18" height="18" viewBox="0 0 18 18" fill="none"><circle cx="9" cy="9" r="8" fill="#7b7972" stroke="#35332f" /><path d="M5.500 5.500h7v7h-7z" stroke="#3b3935" /></svg>
          <svg width="18" height="18" viewBox="0 0 18 18" fill="none"><circle cx="9" cy="9" r="8" fill="#ec6038" stroke="#35332f" /><path d="M6 6l6 6M12 6l-6 6" stroke="#4a1c0c" strokeWidth="1.300" /></svg>
        </div>
      </div>

      {/* menu bar */}
      <div className="flex h-[22px] shrink-0 items-center border-b border-[#d0cdca] bg-[#efebe7] pl-[10px]">
        {MENUS.map(([a, b, c, cls, w]) => (
          <div key={a + b + c} className={"flex shrink-0 " + cls}>
            <Fit w={w}>{a}<span className="underline decoration-[1.5px] underline-offset-[3px]">{b}</span>{c}</Fit>
          </div>
        ))}
      </div>

      {/* toolbars */}
      <div className={BAR + " h-[38px]"}>
        <Handle first />
        <Btn i="newDoc" /><Btn i="open" /><Btn i="save" /><Btn i="saveAs" /><Btn i="newLayout" /><Btn i="layoutMgr" />
        <Handle />
        <Btn i="hand" /><Btn i="panSel" /><Btn i="zoomIn" /><Btn i="zoomOut" /><Btn i="zoom11" /><Btn i="zoomFull" /><Btn i="zoomSel" />
        <Btn i="zoomLayer" /><Btn i="zoomLast" /><Btn i="zoomNext" /><Btn i="bookNew" /><Btn i="bookShow" /><Btn i="bookMgr" /><Btn i="refresh" />
        <Handle />
        <Btn i="info" /><MenuBtn i="runAction" grey /><MenuBtn i="select" /><MenuBtn i="selForm" /><Btn i="deselect" /><Btn i="table" />
        <Btn i="abacus" /><Btn i="gear" on /><Btn i="sigma" /><MenuBtn i="measure" on /><Btn i="tip" /><MenuBtn i="annot" />
        <Handle />
        <Btn i="help" />
      </div>
      <div className="h-px shrink-0 bg-[#b3b0ad]" />
      <div className={BAR + " h-[38px]"}>
        <Handle first />
        <Btn i="pencils" sub /><Btn i="pencil" /><Btn i="floppyPen" /><Btn i="addPts" /><Btn i="vertexTool" /><Btn i="editRows" /><Btn i="trash" />
        <Btn i="cut" /><Btn i="copy" /><Btn i="paste" /><Btn i="undo" /><Btn i="redo" />
        <Handle />
        <Btn i="tag" /><Btn i="diagram" /><Btn i="tagPin" /><Btn i="gtagPin" /><Btn i="gtagEye" /><Btn i="gtagMove" /><Btn i="gtagRot" /><Btn i="gtagPen" />
        <Handle />
        <Btn i="dbIn" /><Btn i="dbOut" /><Btn i="db" />
        <Handle /><Btn i="globeBino" />
        <Handle /><Btn i="python" />
        <Handle /><Btn i="topo" />
        <Handle />
        <Btn i="magnet" /><Btn i="snapVec" sub /><Btn i="snapPts" sub />
        <div className="flex h-[23px] w-[117px] shrink-0 items-center justify-between rounded-[3px] border border-[#b5b2af] bg-[#efece9] pl-[4px] text-[#c3c0bd]"><Fit w={30} className="pt-px">0.00</Fit><Spin c="#dad8d5" /></div>
        <div className="mr-px flex h-[24px] w-[57px] shrink-0 items-center justify-between rounded-[3px] border border-[#bfbcb9] bg-[#f6f4f2] pr-[6px] pl-[4px] text-[#bebbb8]"><Fit w={29}>feet</Fit><Caret c="#dad8d5" /></div>
        <Btn i="snapTopo" /><Btn i="snapX" /><MenuBtn i="trace" grey />
      </div>
      <div className="h-px shrink-0 bg-[#b3b0ad]" />
      <div className={BAR + " h-[37px]"}>
        <Handle first />
        <Btn i="triRuler" /><MenuBtn i="movePts" grey /><Btn i="rotFeat" /><Btn i="simplify" /><Btn i="addRing" /><Btn i="addPart" /><Btn i="fillRing" />
        <Btn i="delRing" /><Btn i="delPart" /><Btn i="reshape" /><Btn i="offset" /><Btn i="split" /><Btn i="split" /><Btn i="merge" /><Btn i="mergeAttr" /><MenuBtn i="rotSym" grey />
        <Handle />
        <MenuBtn i="arc" grey /><MenuBtn i="circ" grey /><MenuBtn i="ell" grey /><MenuBtn i="rectI" grey /><MenuBtn i="poly" grey />
      </div>
      <div className="h-px shrink-0 bg-[#b3b0ad]" />

      {/* workspace */}
      <div className="flex min-h-0 flex-1">
        <div className="flex w-[39px] shrink-0 flex-col items-center gap-[8px] border-r border-[#b3b0ad] bg-gradient-to-r from-[#f8f5f2] to-[#edeae6] pt-[7px]">
          <svg width="17" height="5" viewBox="0 0 17 5"><path d="M0 .5h17M0 3.500h17" stroke="#b5b2af" strokeDasharray="1 2" /></svg>
          <div className="-mt-[3px] flex flex-col gap-[8px]">
            {["addLayer", "geopkg", "shp", "feather", "chip"].map((i) => <Svg key={i} className="ml-[2px]">{I[i]}</Svg>)}
          </div>
        </div>

        {/* layers */}
        <div className="flex w-[282px] shrink-0 flex-col pl-px">
          <div className="flex h-[20px] shrink-0 items-center justify-between pt-px pr-[2px] pl-[4px]"><Fit w={44}>Layers</Fit><DockBtns /></div>
          <div className="flex h-[31px] shrink-0 items-center pb-px pl-[8px]">
            <Small i="brush" /><Small i="addGroup" /><Small i="eye" sub /><Small i="funnel" />
            <Small i="epsFilter" /><Caret className="-ml-[4px] mr-[8px]" /><Small i="expand" /><Small i="collapse" /><Small i="remove" />
          </div>
          <div className="flex flex-1 flex-col border border-[#b3b0ad] bg-white font-bold">
            <div className="flex h-[19px] items-center bg-[#308cc6] pl-[23px] text-white">
              <Check />
              <svg width="16" height="16" viewBox="0 0 16 16" className="mr-[6px] ml-[6px]"><circle cx="8" cy="8" r="6.200" fill="#a53a50" stroke="#66415f" /></svg>
              <Fit w={45} className="underline decoration-1 underline-offset-[2px]">Points</Fit>
            </div>
            <div className="flex h-[19px] items-center pl-[23px]">
              <Check />
              <div className="mr-[6px] ml-[6px] h-[3px] w-[16px] bg-black" />
              <Fit w={34}>lines</Fit>
            </div>
          </div>
        </div>

        <Splitter />

        {/* map and attribute table */}
        <div className="flex w-[639px] shrink-0 flex-col pt-px">
          <div className="h-[310px] shrink-0 border border-[#b3b0ad] bg-white">
            <svg width="637" height="308" viewBox="328 171 637 308" fill="none">
              <path d="M320 362.600L760 276.500 980 211" stroke="#000" strokeWidth="4" />
              {DOTS.map(([x, y]) => <circle key={x} cx={x} cy={y} r="7.400" fill="#d7191c" stroke="#231a1a" strokeWidth="1.100" />)}
            </svg>
          </div>
          <div className="flex h-[6px] shrink-0 items-center justify-center pl-[4px]">
            <svg width="17" height="2" viewBox="0 0 17 2"><path d="M0 1h17" stroke="#b5b2af" strokeDasharray="1 2" /></svg>
          </div>
          <div className="flex h-[21px] shrink-0 items-center justify-between pr-[2px] pb-px pl-[7px]"><Fit w={344}>Points :: Features Total: 87, Filtered: 87, Selected: 0</Fit><DockBtns /></div>
          <div className="flex h-[29px] shrink-0 items-center pb-[3px] pl-[8px]">
            <Small i="pencil" /><Small i="editRows" /><Small i="floppyPen" /><Small i="refresh" /><SmallSep />
            <Small i="newRows" /><Small i="trash" /><Small i="cut" /><Small i="copy" /><Small i="paste" /><SmallSep />
            <Small i="selExpr" /><Small i="selAll" /><Small i="invert" /><Small i="deselect" /><Small i="funnel" /><Small i="topSel" /><Small i="panSel" /><Small i="zoomSel" /><SmallSep />
            <Small i="addCol" /><Small i="delCol" /><Small i="abacus" /><SmallSep />
            <Small i="cond" /><SmallSep /><Small i="dock" />
          </div>
          <div className="flex h-[246px] shrink-0 border border-[#b3b0ad] bg-white">
            <div className="flex flex-1 flex-col overflow-hidden">
              <div className="flex h-[21px] shrink-0 bg-[#efebe7]">
                <div className="flex h-full border-b border-[#b3b0ad] bg-gradient-to-b from-[#faf8f6] to-[#edeae7]">
                  <div className="flex w-[122px] items-center justify-center border-r border-[#c5c2bf] pl-[22px]"><Fit w={12}>id</Fit></div>
                  <div className="flex w-[100px] items-center justify-center border-r border-[#c5c2bf]"><Fit w={57}>distance</Fit></div>
                  <div className="flex w-[100px] items-center justify-center"><Fit w={37}>angle</Fit></div>
                </div>
              </div>
              {ROWS.map((d, r) => (
                <div key={d} className={`flex h-[30px] w-[322px] shrink-0 ${r % 2 ? "bg-[#f6f5f4]" : "bg-white"}`}>
                  <div className="flex w-[22px] items-center border-r border-b border-[#b3b0ad] bg-gradient-to-b from-[#faf8f6] to-[#edeae7] pt-px pl-[2px]"><Fit w={8}>{String(r + 1)}</Fit></div>
                  <div className="w-[100px] border-r border-b border-[#c5c2bf]" />
                  <div className="flex w-[100px] items-center justify-end border-r border-b border-[#c5c2bf] pr-[3px] pb-px"><Fit w={84}>{d}</Fit></div>
                  <div className="flex w-[100px] items-center justify-end border-r border-b border-[#c5c2bf] pr-[3px] pb-px"><Fit w={63}>70.69650</Fit></div>
                </div>
              ))}
            </div>
            <div className="flex w-[15px] flex-col border-l border-[#b8b5b2] bg-[#e2e0dd]">
              <Tri up />
              <div className="h-[27px] border-y border-[#b8b5b2] bg-gradient-to-r from-white to-[#f1efec]" />
              <div className="flex-1 border-b border-[#b8b5b2]" />
              <Tri />
            </div>
          </div>
          <div className="flex items-start justify-between pt-px pr-[3px] pl-[3px]">
            <div className="relative flex h-[23px] w-[156px] items-center rounded-[3px] border border-[#a9a6a3] bg-gradient-to-b from-white to-[#efedea] pl-[4px]">
              <Svg s={16} className="mr-[4px]">{I.funnel}</Svg><Fit w={121}>Show All Features</Fit>
              <Caret className="absolute right-[1px] bottom-[3px] w-[6px]" />
            </div>
            <div className="flex">
              <div className="flex h-[23px] w-[24px] items-center justify-center rounded-l-[3px] border border-[#a9a6a3] bg-[#f5f3f1]"><Svg s={15}>{I.formV}</Svg></div>
              <div className="-ml-px flex h-[23px] w-[24px] items-center justify-center rounded-r-[3px] border border-[#a9a6a3] bg-[#d9d7d5]"><Svg s={16}>{I.table}</Svg></div>
            </div>
          </div>
        </div>

        <Splitter />

        {/* processing toolbox */}
        <div className="flex w-[503px] shrink-0 flex-col">
          <div className="flex h-[20px] shrink-0 items-center justify-between pt-px pr-px pl-[4px]"><Fit w={132}>Processing Toolbox</Fit><DockBtns /></div>
          <div className="flex h-[31px] shrink-0 items-center pb-px pl-[8px]">
            <Small i="procGears" sub /><Small i="pythonS" sub /><Small i="clock" /><Small i="log" /><Small i="wrench" />
          </div>
          <div className="flex h-[25px] shrink-0 items-center rounded-l-[3px] border border-r-0 border-[#a9a6a3] bg-white pr-[8px] pl-[8px]">
            <Lens /><div className="ml-[7px] flex-1"><Fit w={30}>poin</Fit></div>
            <svg width="13" height="10" viewBox="0 0 13 10"><path d="M4 0h9v10H4L0 5z" fill="#8e8c89" /><path d="M5.500 2.500l5 5M10.500 2.500l-5 5" stroke="#fff" strokeWidth="1.200" /></svg>
          </div>
          <div className="flex min-h-0 flex-1 border border-r-0 border-[#b3b0ad] bg-white">
            <div className="flex flex-1 flex-col overflow-hidden">{TREE.map((n) => <TreeRow key={n.t} n={n} />)}</div>
            <div className="flex w-[14px] shrink-0 flex-col border-l border-[#b8b5b2] bg-[#e2e0dd]">
              <Tri up />
              <div className="h-[78px] border-t border-[#b8b5b2]" />
              <div className="h-[264px] border-y border-[#b8b5b2] bg-gradient-to-r from-white to-[#f1efec]" />
              <div className="flex-1 border-b border-[#b8b5b2]" />
              <Tri />
            </div>
          </div>
        </div>
      </div>

      {/* status bar */}
      <div className="flex h-[30px] shrink-0 items-center pb-[1px]">
        <div className="ml-[4px] flex h-[25px] w-[243px] shrink-0 items-center rounded-[3px] border border-[#a9a6a3] bg-white pl-[8px] text-[#8a8885]"><Lens /><Fit w={152} className="ml-[7px] pt-px">Type to locate (Ctrl+K)</Fit></div>
        <Fit w={177} className="mt-[3px] ml-[9px]">1 legend entries removed.</Fit>
        <Fit w={76} className="mt-px ml-[40px]">Coordinate</Fit>
        <div className="ml-[3px] flex h-[25px] w-[124px] shrink-0 items-center rounded-[3px] border border-[#a9a6a3] bg-white pl-[3px]"><Fit w={115} className="pt-px">2205144,246021</Fit></div>
        <svg width="16" height="16" viewBox="0 0 16 16" fill="none" className="ml-[3px] shrink-0"><path d="M2 3l8 10M5 1l8 9M1 7l5 5M9 1L2 7M12 5l-6 6" stroke="#333" strokeWidth="1.200" /><ellipse cx="10" cy="10.500" rx="3.600" ry="4.600" transform="rotate(-30 10 10.500)" fill="#eee" stroke="#333" strokeWidth="1.200" /><path d="M7 9l4-2M11 4l4-3" stroke="#333" strokeDasharray="1.500 1" /></svg>
        <Fit w={35} className="mt-px ml-[14px]">Scale</Fit>
        <div className="ml-[4px] flex h-[25px] w-[104px] shrink-0 items-center justify-between rounded-[3px] border border-[#a9a6a3] bg-white pl-[4px]"><Fit w={49} className="pt-px">1:1,710</Fit><div className="flex h-full w-[19px] items-center justify-center border-l border-[#b8b5b2] bg-[#f7f5f3]"><Caret className="w-[8px]" /></div></div>
        <svg width="12" height="16" viewBox="0 0 12 16" fill="none" className="ml-[7px] shrink-0"><path d="M2.500 8V4.500a3.500 3.500 0 0 1 7 0V8" stroke="#8a8885" strokeWidth="1.600" /><rect y="7" width="12" height="8" rx="1" fill="#555350" /></svg>
        <Fit w={66} className="mt-[3px] ml-[15px]">Magnifier</Fit>
        <div className="mt-[2px] ml-[3px] flex h-[24px] w-[96px] shrink-0 items-center justify-between rounded-[3px] border border-[#a9a6a3] bg-white pl-[4px]"><Fit w={38} className="pt-px">100%</Fit><Spin /></div>
        <Fit w={59} className="mt-[3px] ml-[11px]">Rotation</Fit>
        <div className="ml-[9px] flex h-[23px] w-[94px] shrink-0 items-center justify-between rounded-[3px] border border-[#a9a6a3] bg-white pl-[4px]"><Fit w={30} className="pt-px">0.0 °</Fit><Spin /></div>
        <div className="ml-[6px]"><Check /></div>
        <Fit w={50} className="mt-px ml-[5px]">Render</Fit>
        <svg width="16" height="16" viewBox="0 0 16 16" fill="none" className="mt-px ml-[18px] shrink-0"><circle cx="8" cy="8" r="5.500" fill="#c3c1be" stroke="#8f8d8a" /><path d="M1 8h14M8 1v14M3 5h10M3 11h10M5.500 3q-2 5 0 10M10.500 3q2 5 0 10" stroke="#777572" strokeWidth=".9" /></svg>
        <Fit w={74} className="mt-[2px] ml-[4px]">EPSG:2274</Fit>
        <svg width="17" height="15" viewBox="0 0 17 15" fill="none" className="mt-[3px] ml-[19px] shrink-0"><path d="M8 0c5 0 8 2 8 5.500 0 3 0 3-1.500 4.500.3 2 .8 3 1.500 4.500-3-.5-4.500-1.500-5.500-3.500H8C3.500 11 0 9 0 5.500S3.500 0 8 0z" fill="#5d5b58" /><path d="M4 5.500h1.800M7.200 5.500H9M10.500 5.500h1.800" stroke="#fff" strokeWidth="1.600" /></svg>
        <svg width="10" height="10" viewBox="0 0 10 10" className="mt-[14px] ml-auto shrink-0"><path d="M9.500 0v10M6.500 3v7M3.500 6v4" stroke="#b0aeab" strokeDasharray="1 2" /></svg>
      </div>
      <div className="h-[2px] shrink-0 bg-[linear-gradient(90deg,#15101a_0,#0c0a12_48%,#5a3208_50%,#c8721a_53%,#3a1d08_58%,#a85a12_62%,#5a2f08_70%,#101420_74%,#0c1830_100%)]" />
    </div>
  );
}
